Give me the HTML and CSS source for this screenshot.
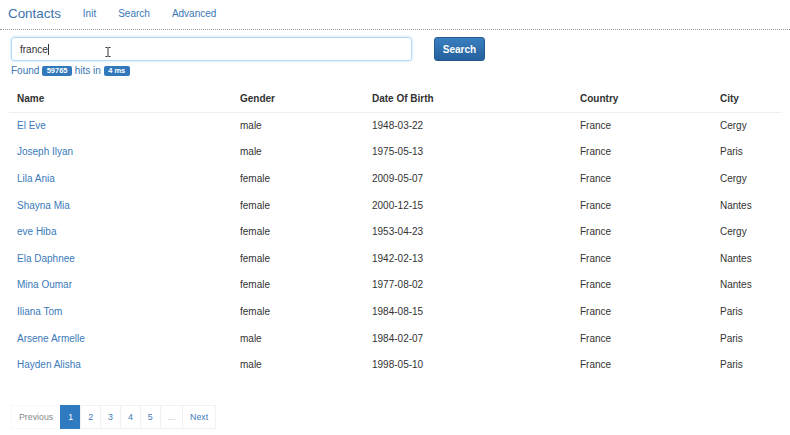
FILE: index.html
```html
<!DOCTYPE html>
<html>
<head>
<meta charset="utf-8">
<title>Contacts</title>
<link rel="stylesheet" href="styles.css">
</head>
<body>
<nav class="navbar">
  <a class="brand" href="#">Contacts</a>
  <a class="nav-link" href="#">Init</a>
  <a class="nav-link" href="#">Search</a>
  <a class="nav-link" href="#">Advanced</a>
</nav>
<main class="page">
  <form class="search-form">
    <div class="input-wrap">
      <div class="search-input"><span class="typed">france</span><span class="caret"></span></div>
      <svg class="ibeam" width="6" height="10" viewBox="0 0 6 10"><path d="M0.5 0.5h2M3.5 0.5h2M3 0.5v9M0.5 9.5h2M3.5 9.5h2" stroke="#333" stroke-width="1" fill="none"/></svg>
    </div>
    <button type="button" class="btn-search">Search</button>
  </form>
  <p class="found">Found <span class="badge">59765</span> hits in <span class="badge">4 ms</span></p>
  <table class="results">
    <colgroup>
      <col class="c1"><col class="c2"><col class="c3"><col class="c4"><col class="c5">
    </colgroup>
    <thead>
      <tr><th>Name</th><th>Gender</th><th>Date Of Birth</th><th>Country</th><th>City</th></tr>
    </thead>
    <tbody>
      <tr><td><a href="#">El Eve</a></td><td>male</td><td>1948-03-22</td><td>France</td><td>Cergy</td></tr>
      <tr><td><a href="#">Joseph Ilyan</a></td><td>male</td><td>1975-05-13</td><td>France</td><td>Paris</td></tr>
      <tr><td><a href="#">Lila Ania</a></td><td>female</td><td>2009-05-07</td><td>France</td><td>Cergy</td></tr>
      <tr><td><a href="#">Shayna Mia</a></td><td>female</td><td>2000-12-15</td><td>France</td><td>Nantes</td></tr>
      <tr><td><a href="#">eve Hiba</a></td><td>female</td><td>1953-04-23</td><td>France</td><td>Cergy</td></tr>
      <tr><td><a href="#">Ela Daphnee</a></td><td>female</td><td>1942-02-13</td><td>France</td><td>Nantes</td></tr>
      <tr><td><a href="#">Mina Oumar</a></td><td>female</td><td>1977-08-02</td><td>France</td><td>Nantes</td></tr>
      <tr><td><a href="#">Iliana Tom</a></td><td>female</td><td>1984-08-15</td><td>France</td><td>Paris</td></tr>
      <tr><td><a href="#">Arsene Armelle</a></td><td>male</td><td>1984-02-07</td><td>France</td><td>Paris</td></tr>
      <tr><td><a href="#">Hayden Alisha</a></td><td>male</td><td>1998-05-10</td><td>France</td><td>Paris</td></tr>
    </tbody>
  </table>
  <ul class="pagination">
    <li><a class="prev" href="#">Previous</a></li>
    <li><a class="active" href="#">1</a></li>
    <li><a href="#">2</a></li>
    <li><a href="#">3</a></li>
    <li><a href="#">4</a></li>
    <li><a href="#">5</a></li>
    <li><span class="dots">...</span></li>
    <li><a href="#">Next</a></li>
  </ul>
</main>
</body>
</html>
```
FILE: styles.css
```css
* { box-sizing: border-box; }
html, body { margin: 0; padding: 0; background: #fff; }
body {
  font-family: "Liberation Sans", Arial, sans-serif;
  font-size: 10px;
  color: #333;
  width: 790px;
  height: 435px;
  overflow: hidden;
}
a { color: #3a7ab9; text-decoration: none; }

.navbar {
  display: flex;
  align-items: center;
  gap: 22px;
  height: 30px;
  padding: 0 0 3px 8px;
  border-bottom: 1px dotted #9a9a9a;
}
.brand { font-size: 13.4px; color: #3b74ad; }
.nav-link { font-size: 10px; color: #3a78b6; }

.page { padding: 7px 9px 0 11px; }

.search-form { display: flex; align-items: center; gap: 22px; }
.input-wrap { position: relative; }
.search-input {
  width: 401px;
  height: 24px;
  border: 1px solid #b3daf5;
  border-radius: 3px;
  box-shadow: 0 0 3px rgba(120, 185, 235, 0.45);
  padding: 0 8px;
  display: flex;
  align-items: center;
  font-size: 10px;
  color: #333;
}
.caret { display: inline-block; width: 1px; height: 11px; background: #333; }
.ibeam { position: absolute; left: 94px; top: 10px; }

.btn-search {
  width: 51px;
  height: 24px;
  border: 1px solid #245a8e;
  border-radius: 3px;
  background: linear-gradient(#3a7fc0, #24609d);
  color: #fff;
  font-family: "Liberation Sans", Arial, sans-serif;
  font-weight: bold;
  font-size: 10px;
  padding: 0;
}

.found {
  margin: 4px 0 0 0;
  line-height: 12px;
  color: #3a78b6;
  font-size: 10px;
}
.badge {
  display: inline-block;
  background: #3279bc;
  color: #fff;
  font-weight: bold;
  font-size: 7.5px;
  line-height: 10px;
  padding: 0 4.5px;
  border-radius: 2px;
  vertical-align: 1px;
}

.results {
  border-collapse: collapse;
  margin: 9px 0 0 -2px;
  width: 772px;
  table-layout: fixed;
}
.c1 { width: 223px; }
.c2 { width: 132px; }
.c3 { width: 208px; }
.c4 { width: 140px; }
.c5 { width: 69px; }
.results th {
  text-align: left;
  font-weight: bold;
  font-size: 10px;
  color: #333;
  padding: 0 8px;
  height: 26px;
  border-bottom: 1px solid #eee;
}
.results td {
  padding: 0 8px;
  height: 26.6px;
  font-size: 10px;
  color: #333;
}
.results td a { color: #3a7ab9; }

.pagination {
  list-style: none;
  display: flex;
  margin: 27px 0 0 0;
  padding: 0;
}
.pagination a, .pagination .dots {
  display: block;
  font-size: 8.8px;
  line-height: 10px;
  padding: 6px 7px;
  border: 1px solid #f1f1f1;
  margin-left: -1px;
  color: #3a7ab9;
}
.pagination .prev { color: #888; margin-left: 0; border-color: #f8f8f8; }
.pagination .dots { color: #aaa; }
.pagination .active { background: #2f7ac0; color: #fff; border-color: #2f7ac0; }
```
